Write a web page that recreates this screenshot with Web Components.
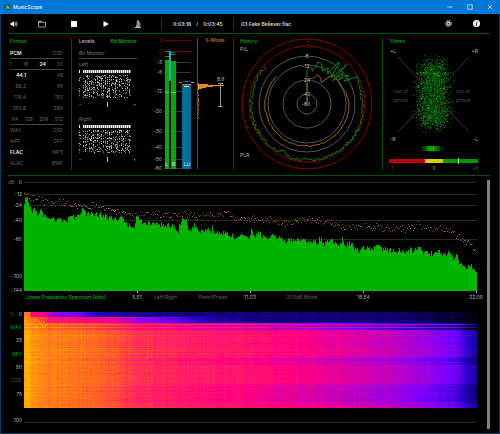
<!DOCTYPE html>
<html lang="en">
<head>
<meta charset="utf-8">
<meta name="viewport" content="width=device-width, initial-scale=1">
<title>MusicScope</title>
<style>
    html, body { margin: 0; background: #000; }
    body { font: 5px/6px Inter, "Liberation Sans", sans-serif; color: #b4b4b4; }
</style>
</head>
<body>
<ms-window>
    <ms-titlebar slot="bars">MusicScope</ms-titlebar>
    <ms-toolbar slot="bars" position="0:03:16" duration="0:03:45" file="03 Fake Believer.flac"></ms-toolbar>
    <ms-panel slot="panels" heading="Format"><ms-format></ms-format></ms-panel>
    <ms-levels slot="panels"></ms-levels>
    <ms-panel slot="panels"><ms-meter></ms-meter></ms-panel>
    <ms-panel slot="panels"><ms-history></ms-history></ms-panel>
    <ms-panel slot="panels" last><ms-stereo></ms-stereo></ms-panel>
    <ms-spectrum slot="charts"></ms-spectrum>
    <ms-spectrogram slot="charts"></ms-spectrogram>
</ms-window>

<script>
// Seeded generator, so every redraw gives the same traces
function seeded(seed) {
    let s = seed;
    return () => {
        s = (s * 1664525 + 1013904223) % 4294967296;
        return s / 4294967296;
    };
}

// Linear interpolation over [x, y] points
function lerpPoints(points, x) {
    for (let i = 1; i < points.length; i++) {
        if (x <= points[i][0]) {
            const [x0, y0] = points[i - 1];
            const [x1, y1] = points[i];
            return y0 + (y1 - y0) * (x - x0) / (x1 - x0);
        }
    }
    return points[points.length - 1][1];
}

class MsElement extends HTMLElement {
    constructor() {
        super();
        this.attachShadow({ mode: 'open' });
    }

    connectedCallback() {
        this.shadowRoot.innerHTML = `
            <style>
                :host { display: block; min-width: 0; }
                * { box-sizing: border-box; }
                svg { display: block; width: 100%; height: auto; }
                svg text { font-size: 5px; fill: #b4b4b4; }
                .end { text-anchor: end; }
                .mid { text-anchor: middle; }
                button {
                    padding: 0;
                    border: 0;
                    background: none;
                    font: inherit;
                    color: inherit;
                    white-space: nowrap;
                    cursor: pointer;
                }
            </style>
            ${this.template()}
        `;
        this.draw();
    }

    draw() {}
}

class MsWindow extends MsElement {
    template() {
        return `
            <style>
                :host { display: flex; flex-direction: column; min-height: 100vh; background: #000; }
                .frame {
                    flex: 1;
                    display: flex;
                    flex-direction: column;
                    border: 1px solid #0b3f6b;
                    border-top: 0;
                    margin-top: -19px;
                    padding-top: 19px;
                }
                .panels {
                    display: grid;
                    grid-template-columns: 64fr 78fr 84fr 149fr 107fr;
                    margin: 0 9px 0 7px;
                    padding: 4px 0 5px;
                    border: solid #005500;
                    border-width: 1px 0;
                }
                .main { display: flex; flex: 1; padding-right: 9px; }
                .charts { flex: 1; min-width: 0; }
                .scrollbar { width: 3px; margin: 4px 0; background: #808080; }
            </style>
            <slot name="bars"></slot>
            <div class="frame">
                <div class="panels"><slot name="panels"></slot></div>
                <div class="main">
                    <div class="charts"><slot name="charts"></slot></div>
                    <div class="scrollbar"></div>
                </div>
            </div>
        `;
    }
}

class MsTitlebar extends MsElement {
    template() {
        return `
            <style>
                :host {
                    display: flex;
                    align-items: center;
                    height: 14px;
                    padding-left: 4px;
                    background: #0078d7;
                    color: #fff;
                    z-index: 1;
                }
                .logo { width: 7px; height: 7px; margin-right: 2px; }
                .title { flex: 1; }
                button { width: 20px; height: 14px; }
                button svg { width: 6px; height: 6px; margin: 0 auto; fill: none; stroke: #d5eaff; }
            </style>
            <svg class="logo" viewBox="0 0 14 14">
                <circle cx="7" cy="7" r="7" fill="#0b5d62"/>
                <path d="M3 11 6 3 8 10 9 5 11 10" fill="none" stroke="#6cc9a0" stroke-width="1.6"/>
            </svg>
            <span class="title"><slot></slot></span>
            <button type="button" aria-label="Minimize"><svg viewBox="0 0 12 12"><path d="M1 6h10" stroke-width="1.6"/></svg></button>
            <button type="button" aria-label="Maximize"><svg viewBox="0 0 12 12"><path d="M1.5 1.5h9v9h-9z" stroke-width="1.6"/></svg></button>
            <button type="button" aria-label="Close"><svg viewBox="0 0 12 12"><path d="m1.5 1.5 9 9m0-9-9 9" stroke-width="1.6"/></svg></button>
        `;
    }
}

class MsIconButton extends MsElement {
    template() {
        return `
            <style>
                :host { display: block; width: 32px; }
                :host([compact]) { width: 24px; }
                button { display: flex; align-items: center; justify-content: center; width: 100%; height: 18px; }
            </style>
            <button type="button" aria-label="${this.getAttribute('label')}"><slot></slot></button>
        `;
    }
}

class MsToolbar extends MsElement {
    template() {
        return `
            <style>
                :host {
                    display: flex;
                    align-items: center;
                    height: 19px;
                    padding: 0 8px 0 2px;
                    color: #ddd;
                    font-weight: 600;
                    z-index: 1;
                }
                svg { width: 8px; height: 8px; }
                svg.small { width: 7px; height: 7px; }
                .divider { width: 1px; height: 12px; background: #005500; }
                .time { display: flex; gap: 5px; width: 71px; padding-left: 11px; }
                .file { padding-left: 7px; flex: 1; }
                .buttons { display: flex; width: 159px; }
            </style>
            <div class="buttons">
                <ms-icon-button label="Volume" compact>
                    <svg viewBox="0 0 16 16" fill="#eee"><path d="M1 5.5h3L8.5 2v12L4 10.5H1z"/><path d="M10.5 5q2 3 0 6M12.5 3q3.5 5 0 10" fill="none" stroke="#ddd" stroke-width="1.5"/></svg>
                </ms-icon-button>
                <ms-icon-button label="Open">
                    <svg viewBox="0 0 16 16" fill="none" stroke="#bbb" stroke-width="1.6"><path d="M1 14V2.5h5l1.5 2H15V14z"/><path d="M1 4h7" stroke-width="2.5"/></svg>
                </ms-icon-button>
                <ms-icon-button label="Stop">
                    <svg viewBox="0 0 16 16" fill="#fff"><path d="M2 2h12v12H2z"/></svg>
                </ms-icon-button>
                <ms-icon-button label="Play">
                    <svg viewBox="0 0 16 16" fill="#fff"><path d="M3 2l11 6-11 6z"/></svg>
                </ms-icon-button>
                <ms-icon-button label="Analyse">
                    <svg viewBox="0 0 16 16" fill="none" stroke="#ddd" stroke-width="1.7"><path d="M8 0v3M6.5 3h3v5.5h-3zM10 5q4 2.5 1.500 7M4 10.5h6M2 15h12M4 12.5h8"/></svg>
                </ms-icon-button>
            </div>
            <div class="divider"></div>
            <div class="time">
                <span>${this.getAttribute('position')}</span>
                <span>/</span>
                <span>${this.getAttribute('duration')}</span>
            </div>
            <div class="divider"></div>
            <div class="file">${this.getAttribute('file')}</div>
            <ms-icon-button label="Settings" compact>
                <svg class="small" viewBox="0 0 16 16"><circle cx="8" cy="8" r="5" fill="#ccc"/><circle cx="8" cy="8" r="6.5" fill="none" stroke="#ccc" stroke-width="2.6" stroke-dasharray="2.7 2.4"/><circle cx="8" cy="8" r="2" fill="#333"/></svg>
            </ms-icon-button>
            <ms-icon-button label="Information">
                <svg class="small" viewBox="0 0 16 16"><circle cx="8" cy="8" r="8" fill="#fff"/><path d="M9.3 3v2.500M6.500 7.300h2L7.500 12.500h2" fill="none" stroke="#000" stroke-width="2"/></svg>
            </ms-icon-button>
        `;
    }
}

class MsPanel extends MsElement {
    template() {
        const heading = this.getAttribute('heading');
        return `
            <style>
                :host { border-right: 1px solid #005500; min-height: 132px; }
                :host([last]) { border-right: 0; }
                .heading { height: 6px; margin: 0 0 4px 2px; color: #009a00; font-weight: 600; }
            </style>
            ${heading ? `<div class="heading">${heading}</div>` : ''}
            <slot></slot>
        `;
    }
}

class MsFormat extends MsElement {
    row(items, active, cls = '') {
        const cells = items.map(t => `<span class="${t === active ? 'on' : ''}">${t}</span>`).join('');
        return `<div class="row ${cls}">${cells}</div>`;
    }

    template() {
        return `
            <style>
                :host { padding: 0 8px 0 2px; color: #606060; }
                .row { display: flex; justify-content: space-between; height: 11px; line-height: 11px; }
                .line { border-bottom: 1px solid #444; }
                .rate span:first-child { width: 16px; text-align: right; }
                .inset { padding-left: 2px; }
                .on { color: #eee; font-weight: 600; }
            </style>
            ${this.row(['PCM', 'DSD'], 'PCM', 'line')}
            ${this.row(['1', '16', '24', '32'], '24', 'line')}
            ${this.row(['44.1', '48'], '44.1', 'rate')}
            ${this.row(['88.2', '96'], '', 'rate')}
            ${this.row(['176.4', '192'], '', 'rate')}
            ${this.row(['352.8', '384'], '', 'rate')}
            ${this.row(['64', '128', '256', '512'], '', 'line inset')}
            ${this.row(['WAV', 'DSF'])}
            ${this.row(['AIFF', 'DFF'])}
            ${this.row(['FLAC', 'MP3'], 'FLAC')}
            ${this.row(['ALAC', 'BWF'])}
        `;
    }
}

class MsLevels extends MsElement {
    bits(seed) {
        const rnd = seeded(seed);
        let out = '<rect x="0" y="0" width="1" height="3" fill="#fff"/>';
        for (let i = 0; i < 24; i++) {
            const x = 4 + i * 2;
            out += `<rect x="${x}" y="0" width="1" height="3" fill="#fff"/>`;
            out += `<rect x="${x + 1}" y="0" width="1" height="3" fill="#777"/>`;
        }
        for (let x = 0; x < 52; x++) {
            if (x === 2 || x === 3) continue;
            const dense = (x % 2 ? 0.12 : 0.35 + rnd() * 0.35);
            for (let y = 5; y < 28; y++) {
                if (rnd() < dense) {
                    const c = Math.round(60 + rnd() * 150);
                    out += `<rect x="${x}" y="${y}" width="1" height="1" fill="rgb(${c},${c},${c})"/>`;
                }
            }
        }
        return `
            <svg viewBox="0 0 58 44" shape-rendering="crispEdges">${out}
                <path d="M28.5 32v5" stroke="#ccc"/>
                <text x="0" y="36">-</text><text x="54" y="36">+</text>
            </svg>`;
    }

    template() {
        return `
            <style>
                :host { padding: 0 13px 0 7px; }
                .tabs { display: flex; justify-content: space-between; height: 6px; margin-bottom: 4px; font-weight: 600; }
                .tabs button { line-height: 6px; }
                .active { color: #00a800; }
                .name { height: 11px; line-height: 11px; color: #777; }
                .line { border-bottom: 1px solid #444; }
            </style>
            <div class="tabs">
                <button type="button">Levels</button>
                <button type="button" class="active">Bit Monitor</button>
            </div>
            <div class="name line">Bit Monitor</div>
            <div class="name">Left</div>
            ${this.bits(7)}
            <div class="name">Right</div>
            ${this.bits(31)}
        `;
    }
}

class MsMeter extends MsElement {
    template() {
        const scale = [[3, 40], [0, 51], [-3, 62], [-6, 72], [-12, 91], [-20, 111], [-30, 131], [-40, 147], [-50, 159], [-60, 168]];
        const grid = scale.map(([db, y]) => `
            <path d="M164 ${y}.5h27" stroke="${db >= 0 ? '#6c0000' : '#383838'}"/>
            <text class="end" x="162" y="${y + 2}" ${db >= 0 ? 'style="fill:#b80000"' : ''}>${db}</text>`).join('');
        const rnd = seeded(5);
        let dots = '';
        for (let y = 93; y < 118; y++) {
            if (rnd() < 0.6) dots += `<rect x="198" y="${y}" width="1" height="1" fill="#a86a10"/>`;
        }
        return `
            <style>.in { fill: #def; } .orange { fill: #b07018; font-weight: 600; }</style>
            <svg viewBox="150 38 83 132" shape-rendering="crispEdges">
                ${grid}
                <rect x="165" y="60" width="4" height="109" fill="#00ac00"/>
                <rect x="171" y="61" width="5" height="108" fill="#00ac00"/>
                <path d="M165 92.5h4M171 92.5h5" stroke="#40f040"/>
                <path d="M165 56.5h4M171 54.5h4" stroke="#00b000"/>
                <path d="M165 51.5h4M171 52.5h4" stroke="#007050"/>
                <rect x="169" y="51" width="2" height="30" fill="#3c9cc4"/>
                <rect x="182" y="85" width="9" height="84" fill="#007098"/>
                <path d="M184 86.5h5" stroke="#c0d8e0"/>
                <path d="M183 81.5h7" stroke="#007098"/>
                <path d="M179 82.5h3M191 82.5h3M182 84.5h9" stroke="#d08020"/>
                <text class="in" x="165" y="166">L</text>
                <text class="in" x="172" y="166">R</text>
                <text class="in mid" x="187" y="166">LU</text>
                <path d="M197.5 38v131" stroke="#7a4c08"/>
                <path d="M198 83h1v-1 2h9v1h16v1h-11v1h-7v1h-4v1h-3v1h-1z" fill="#e09020"/>
                ${dots}
                <path d="M220.5 84v22M218 83.5h5M218 106.5h5" stroke="#999"/>
                <text x="217" y="81">8.6</text>
                <text class="orange mid" x="215" y="42">S-Mode</text>
            </svg>
        `;
    }
}

class MsHistory extends MsElement {
    // Polar trace around the ring centre, degrees clockwise from the top
    trace(points, noise, seed, step) {
        const rnd = seeded(seed);
        let d = 'M307 104';
        for (let a = 0; a <= 313; a += step) {
            const r = lerpPoints(points, a) + (rnd() - 0.5) * noise;
            const t = a * Math.PI / 180;
            d += `L${(307 + r * Math.sin(t)).toFixed(1)} ${(104 - r * Math.cos(t)).toFixed(1)}`;
        }
        return d;
    }

    template() {
        const peak = [[0, 34], [2, 38], [10, 34], [15, 43], [19, 44], [23, 39], [26, 36], [30, 43], [34, 34], [37, 56], [43, 32],
            [45, 55], [48, 33], [50, 54], [52, 36], [55, 54], [58, 42], [61, 56], [80, 55], [110, 57], [180, 56], [200, 56], [208, 52], [212, 56], [313, 56]];
        const loud = [[0, 24], [12, 26], [20, 31], [28, 29], [34, 26], [42, 39], [60, 38], [70, 40], [90, 42], [180, 42], [270, 42], [313, 41]];
        const rings = [[65, '#8c0000'], [58, '#8c0000'], [48, '#555'], [39, '#555'], [24, '#555'], [10, '#555']]
            .map(([r, c]) => `<circle cx="307" cy="104" r="${r}" fill="none" stroke="${c}"/>`).join('');
        const labels = [['-6', 58], ['-12', 68], ['-24', 82], ['-40', 96], ['-60', 106]]
            .map(([t, y]) => `<text class="mid ring" x="306" y="${y}">${t}</text>`).join('');
        return `
            <style>
                .red { fill: #d00000; }
                .head { fill: #009a00; font-weight: 600; }
                .ring { fill: #ddd; }
                .ring, .red { paint-order: stroke; stroke: #000; stroke-width: 1px; }
            </style>
            <svg viewBox="234 38 148 132">
                ${rings}
                <path d="${this.trace(loud, 1, 3, 2)}" fill="none" stroke="#a86c14"/>
                <path d="${this.trace(peak, 3, 11, 1.5)}" fill="none" stroke="#0a8c0a"/>
                <text class="head" x="240" y="43">History</text>
                <text x="240" y="51">P/L</text>
                <text x="240" y="157">PLR</text>
                <text class="red mid" x="307" y="42">3</text>
                <text class="red mid" x="307" y="48">0</text>
                ${labels}
            </svg>
        `;
    }
}

class MsStereo extends MsElement {
    cloud() {
        const rnd = seeded(99);
        let out = '';
        for (let i = 0; i < 2600; i++) {
            const cy = i % 2 ? 79 : 109;
            const gx = (rnd() + rnd() + rnd() - 1.5) * 15;
            const gy = (rnd() + rnd() + rnd() - 1.5) * 18;
            const g = Math.round(50 + rnd() * rnd() * 150);
            out += `<rect x="${Math.round(433 + gx)}" y="${Math.round(cy + gy)}" width="1" height="1" fill="rgb(0,${g},0)"/>`;
        }
        return out;
    }

    template() {
        const rnd = seeded(12);
        let strip = '';
        for (let x = 422; x < 444; x++) {
            const g = Math.round((1 - Math.abs(x - 431) / 14) * (120 + rnd() * 135));
            if (x !== 440 && x !== 441) strip += `<rect x="${x}" y="146" width="1" height="5" fill="rgb(0,${g},0)"/>`;
        }
        return `
            <style>.head { fill: #009a00; font-weight: 600; } .dim { fill: #484848; }</style>
            <svg viewBox="383 38 107 132" shape-rendering="crispEdges">
                <path d="M398 57l71 75M469 57l-71 75" stroke="#383838" shape-rendering="auto"/>
                ${this.cloud()}
                <text class="head" x="390" y="43">Stereo</text>
                <text x="390" y="53">+L</text><text class="end" x="478" y="53">+R</text>
                <text x="390" y="141">-R</text><text class="end" x="478" y="141">-L</text>
                <text class="dim" x="394" y="93">out of</text><text class="dim" x="394" y="102">phase</text>
                <text class="dim" x="456" y="93">out of</text><text class="dim" x="456" y="102">phase</text>
                ${strip}
                <rect x="389" y="159" width="36" height="4" fill="#c00000"/>
                <rect x="425" y="159" width="18" height="4" fill="#d8d000"/>
                <rect x="443" y="159" width="35" height="4" fill="#009800"/>
                <rect x="458" y="158" width="1" height="6" fill="#c8e8c8"/>
                <text x="389" y="170" style="fill:#c00000">-1</text>
                <text class="mid" x="434" y="170" style="fill:#c0b800">0</text>
                <text class="end" x="478" y="170" style="fill:#00a000">+1</text>
            </svg>
        `;
    }
}

class MsSpectrum extends MsElement {
    template() {
        const level = [[24, 206], [26, 197], [28, 203], [31, 212], [35, 210], [38, 217], [40, 208], [43, 216], [50, 219], [60, 220], [66, 221],
            [75, 219], [82, 215], [100, 215], [108, 218], [115, 221], [121, 216], [124, 225], [134, 227], [137, 215], [142, 223], [158, 224],
            [170, 227], [180, 231], [183, 219], [186, 222], [189, 230], [205, 233], [225, 232], [235, 236], [250, 235], [265, 237], [275, 238],
            [290, 240], [313, 243], [340, 245], [347, 243], [360, 251], [373, 248], [390, 252], [410, 253], [418, 249], [428, 256],
            [440, 252], [450, 257], [460, 263], [470, 267], [476, 272]];
        const peak = [[24, 194], [26, 191], [30, 198], [40, 199], [55, 203], [70, 202], [85, 206], [100, 206], [115, 210], [130, 214],
            [185, 215], [215, 216], [225, 212], [235, 218], [250, 219], [290, 222], [312, 218], [330, 224], [350, 226], [380, 227],
            [405, 228], [418, 225], [445, 230], [455, 235], [470, 243], [476, 250]];
        const rnd = seeded(42);
        let area = 'M24 291';
        let dots = '';
        let bump = 0;
        for (let x = 24; x < 477; x++) {
            bump = bump * 0.45 + (rnd() - 0.55) * 6;
            if (rnd() < 0.06) bump -= 5;
            const y = Math.round(lerpPoints(level, x) + bump);
            area += `V${y}h1`;
            const py = Math.round(lerpPoints(peak, x) + (rnd() + rnd() - 1) * 5);
            dots += `<rect x="${x}" y="${py}" width="1" height="1" fill="${rnd() < 0.4 ? '#a87408' : '#644408'}"/>`;
        }
        area += 'V291z';
        const labels = [['0', 182], ['-12', 194], ['-24', 205], ['-40', 220], ['-60', 239], ['-100', 276], ['-144', 290]]
            .map(([t, y]) => `<text class="end" x="22" y="${y + 2}">${t}</text>`).join('');
        return `
            <style>
                .axis {
                    display: grid;
                    grid-template-columns: 107fr 12fr 45fr 50fr 24fr 78fr 47fr 78fr 22fr;
                    padding-left: 23px;
                    height: 8px;
                    line-height: 8px;
                    justify-items: center;
                }
                .axis > * { grid-row: 1; min-width: 0; white-space: nowrap; }
                .axis button { color: #606060; line-height: 8px; }
                .axis .mode { justify-self: start; padding-left: 2px; color: #00c000; }
                .end-label { grid-column: 9; }
            </style>
            <svg viewBox="1 176 486 117" shape-rendering="crispEdges">
                <path d="M24 182.5h453M24 194.5h453M24 205.5h453M24 220.5h453M24 239.5h453" stroke="#282828"/>
                <path d="${area}" fill="#00b400"/>
                ${dots}
                <path d="M137.5 291v2M250.5 291v2M363.5 291v2M476.5 291v2" stroke="#aaa"/>
                <text x="8" y="184" style="fill:#606060">dB</text>
                ${labels}
            </svg>
            <div class="axis">
                <button type="button" class="mode">Linear Frequency Spectrum [kHz]</button>
                <span>5.51</span>
                <button type="button">Left/Right</button>
                <button type="button">Pano/Phase</button>
                <span>11.03</span>
                <button type="button">-200dB Mode</button>
                <span>16.54</span>
                <span class="end-label">22.05</span>
            </div>
        `;
    }
}

class MsSpectrogram extends MsElement {
    template() {
        return `
            <style>
                :host { display: grid; grid-template-columns: 23px 1fr; padding-right: 10px; margin-top: 6px; min-height: 120px; }
                .axis { display: grid; grid-template-rows: repeat(9, 1fr); align-items: center; padding-right: 2px; text-align: right; }
                .axis button { text-align: right; line-height: 6px; }
                .first { display: flex; justify-content: space-between; padding-left: 9px; }
                .axis .on { color: #00a000; }
                .axis .dim { color: #555; }
                .last { grid-row: 9; }
                .plot { display: flex; flex-direction: column; justify-content: space-between; padding: 5px 0 4px; }
                canvas { display: block; width: 100%; height: auto; }
                .base { height: 1px; background: #282828; }
            </style>
            <div class="axis">
                <span class="first"><span class="dim">%</span><span>0</span></span>
                <button type="button" class="on">MAX</button>
                <span>25</span>
                <button type="button" class="on">BRY</button>
                <span>50</span>
                <button type="button" class="dim">COF</button>
                <span>75</span>
                <span class="last">100</span>
            </div>
            <div class="plot">
                <canvas width="453" height="96" role="img" aria-label="Spectrogram"></canvas>
                <div class="base"></div>
            </div>
        `;
    }

    // Colour ramp: black, navy, violet, magenta, red, orange, yellow
    color(v) {
        const r = [[0, 0], [0.12, 12], [0.25, 40], [0.38, 125], [0.5, 200], [0.6, 255], [1, 255]];
        const g = [[0, 0], [0.6, 0], [0.72, 45], [0.82, 105], [1, 195]];
        const b = [[0, 0], [0.12, 110], [0.25, 200], [0.38, 255], [0.5, 185], [0.6, 130], [0.72, 85], [0.82, 30], [1, 0]];
        return [lerpPoints(r, v), lerpPoints(g, v), lerpPoints(b, v)];
    }

    draw() {
        const canvas = this.shadowRoot.querySelector('canvas');
        const ctx = canvas.getContext('2d');
        const image = ctx.createImageData(453, 96);
        const rnd = seeded(77);
        const body = [[0, 0.95], [4, 0.96], [8, 0.9], [20, 0.87], [70, 0.82], [88, 0.79], [110, 0.73], [150, 0.69], [230, 0.64],
            [300, 0.57], [350, 0.51], [390, 0.45], [420, 0.39], [435, 0.34], [452, 0.18]];
        const intro = [[0, 0.88], [5, 0.86], [7, 0.64], [20, 0.58], [30, 0.42], [55, 0.36], [75, 0.22], [130, 0.15], [370, 0.13], [430, 0.06], [452, 0.02]];
        const second = [[0, 0.92], [6, 0.86], [14, 0.76], [24, 0.68], [60, 0.62], [90, 0.57], [115, 0.42], [150, 0.34], [185, 0.22], [230, 0.14], [370, 0.13], [430, 0.06], [452, 0.02]];
        const columns = Array.from({ length: 453 }, () => (rnd() - 0.5) * 0.035);
        let wobble = 0;

        for (let y = 0; y < 96; y++) {
            const line = (rnd() - 0.5) * 0.03 + (rnd() < 0.07 ? 0.035 : 0);
            for (let x = 0; x < 453; x++) {
                let curve = body;
                let shift = line;
                if (y < 5) curve = intro;
                else if (y < 11) curve = second;
                else if (y < 18) shift = (y % 3 === 0 ? 0.02 : -0.05 - x / 453 * 0.16);
                // Quieter passages
                if ((y >= 45 && y < 53) || (y >= 72 && y < 90)) shift -= 0.06 * Math.min(1, x / 260);
                wobble = wobble * 0.6 + (rnd() - 0.5) * 0.025;
                let v = lerpPoints(curve, x) + shift + wobble + columns[x];
                if (x > 8 && x < 24 && y > 4 && y < 18 && rnd() < 0.3) v += 0.1;
                const [r, g, b] = this.color(Math.max(0, Math.min(1, v)));
                const i = (y * 453 + x) * 4;
                image.data[i] = r;
                image.data[i + 1] = g;
                image.data[i + 2] = b;
                image.data[i + 3] = 255;
            }
        }
        ctx.putImageData(image, 0, 0);
    }
}

customElements.define('ms-window', MsWindow);
customElements.define('ms-titlebar', MsTitlebar);
customElements.define('ms-icon-button', MsIconButton);
customElements.define('ms-toolbar', MsToolbar);
customElements.define('ms-panel', MsPanel);
customElements.define('ms-format', MsFormat);
customElements.define('ms-levels', MsLevels);
customElements.define('ms-meter', MsMeter);
customElements.define('ms-history', MsHistory);
customElements.define('ms-stereo', MsStereo);
customElements.define('ms-spectrum', MsSpectrum);
customElements.define('ms-spectrogram', MsSpectrogram);
</script>
</body>
</html>
